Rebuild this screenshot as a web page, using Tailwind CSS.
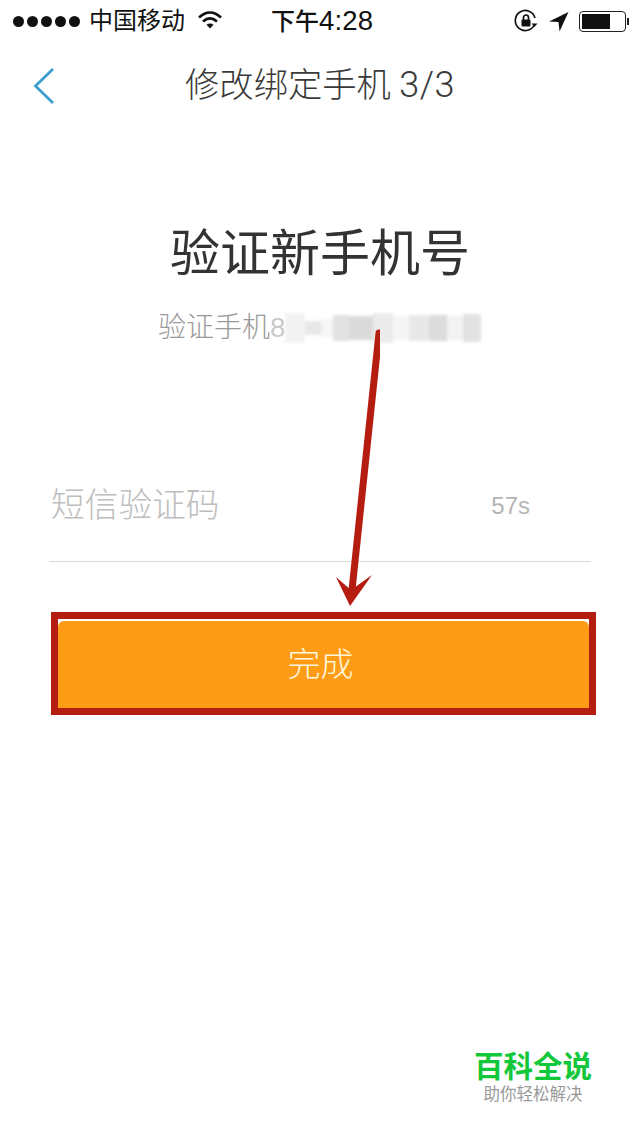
<!DOCTYPE html>
<html lang="zh">
<head>
<meta charset="utf-8">
<script src="https://cdn.jsdelivr.net/npm/@tailwindcss/browser@4"></script>
</head>
<body class="bg-white">
<div class="relative w-[640px] h-[1136px] overflow-hidden bg-white text-[#333] font-['Liberation_Sans','Noto_Sans_CJK_SC',sans-serif]">
  <!-- status bar -->
  <div class="relative h-[42px] flex items-center pl-[13px] pr-[11px] text-[#111]">
    <div class="flex gap-[3px]">
      <span class="w-[11px] h-[11px] rounded-full bg-[#111]"></span>
      <span class="w-[11px] h-[11px] rounded-full bg-[#111]"></span>
      <span class="w-[11px] h-[11px] rounded-full bg-[#111]"></span>
      <span class="w-[11px] h-[11px] rounded-full bg-[#111]"></span>
      <span class="w-[11px] h-[11px] rounded-full bg-[#111]"></span>
    </div>
    <span class="ml-[9px] text-[24px] leading-none">中国移动</span>
    <svg class="ml-[12px] -mt-[3px]" width="26" height="20" viewBox="0 0 26 20" fill="none" stroke="#111" stroke-width="2.6">
      <path d="M2 7.5C9 1 17 1 24 7.5"/><path d="M6 11.5C10.500 7.500 15.500 7.500 20 11.500"/><path d="M13 18.500L9.500 14.800C11.500 13.200 14.500 13.200 16.500 14.800Z" fill="#111" stroke="none"/>
    </svg>
    <span class="ml-[48px] text-[24px] leading-none font-medium">下午<span class="text-[27.500px] tracking-[0.2px]">4:28</span></span>
    <div class="ml-auto flex items-center">
      <svg width="24" height="24" viewBox="0 0 24 24" fill="none" stroke="#111" stroke-width="1.700">
        <path d="M20.500 15.500A10 10 0 1 1 21 9"/><path d="M17.500 14.500L23.500 14.500L20.500 18Z" fill="#111" stroke="none"/>
        <rect x="7.500" y="10.500" width="9" height="7" rx="1" fill="#111" stroke="none"/><path d="M9.500 11V8.500a2.500 2.500 0 0 1 5 0V11"/>
      </svg>
      <svg class="ml-[10px]" width="21" height="21" viewBox="0 0 20 20"><path d="M19.500 1L1 10L10 10.500L11 19.500Z" fill="#111"/></svg>
      <div class="ml-[10px] w-[47px] h-[21px] border-[1.500px] border-[#222] rounded-[4px] p-[2px]"><div class="w-[28px] h-full bg-[#111]"></div></div>
      <span class="ml-[1px] w-[2px] h-[7px] bg-[#222]"></span>
    </div>
  </div>

  <!-- nav -->
  <div class="relative h-[86px] flex items-center justify-center leading-none text-[#3a3a3a] font-light">
    <svg class="absolute left-[32px] top-[24px]" width="24" height="40" viewBox="0 0 24 40" fill="none" stroke="#3b9fd2" stroke-width="2.800"><path d="M21 3L3.500 20L21 37"/></svg>
    <span class="text-[34.300px] -mt-[1px] font-['Roboto','Noto_Sans_CJK_SC',sans-serif] font-light">修改绑定手机 <span class="text-[36px] tracking-[0.5px]">3/3</span></span>
  </div>

  <!-- heading -->
  <h1 class="mt-[96px] text-center text-[50px] leading-[60px] text-[#333] font-normal">验证新手机号</h1>

  <div class="mt-[26px] ml-[158px] h-[36px] flex items-center text-[28px] leading-none text-[#9a9a9a] font-light">
    <span>验证手机</span><span class="text-[28px] text-[#c8c8c8] blur-[0.5px]">8</span>
    <div class="-ml-[1px] flex items-center blur-[1.500px]">
      <span class="w-[20px] h-[30px] bg-[#f3f3f3]"></span>
      <span class="w-[16px] h-[14px] bg-[#e8e8e8]"></span>
      <span class="w-[12px] h-[18px] bg-[#f6f6f6]"></span>
      <span class="w-[16px] h-[26px] bg-[#e2e2e2]"></span>
      <span class="w-[24px] h-[24px] bg-[#dadada]"></span>
      <span class="w-[20px] h-[30px] bg-[#ebebeb]"></span>
      <span class="w-[16px] h-[24px] bg-[#f5f5f5]"></span>
      <span class="w-[20px] h-[26px] bg-[#e8e8e8]"></span>
      <span class="w-[18px] h-[26px] bg-[#dcdcdc]"></span>
      <span class="w-[16px] h-[24px] bg-[#f2f2f2]"></span>
      <span class="w-[18px] h-[28px] bg-[#e2e2e2]"></span>
    </div>
  </div>

  <!-- input -->
  <div class="mt-[134px] mx-[49px] w-[542px] h-[82px] pb-[30px] border-b border-[#d9d9d9] flex items-center justify-between pl-[2px] pr-[61px]">
    <span class="text-[33.700px] leading-none text-[#bebebe] font-light">短信验证码</span>
    <span class="text-[24px] leading-none text-[#b5b5b5]">57s</span>
  </div>

  <!-- button with highlight -->
  <div class="mt-[50px] ml-[51px] w-[545px] h-[103px] border-[7px] border-[#b51d10]">
    <div class="h-full bg-white pt-[2px]">
      <div class="h-full bg-[#fe9c15] rounded-t-[6px] flex items-center justify-center pr-[6px] text-[33px] leading-none text-[#fff6dc] font-light">完成</div>
    </div>
  </div>

  <!-- annotation arrow -->
  <svg class="absolute left-[330px] top-[325px]" width="50" height="285" viewBox="0 0 50 285">
    <path d="M49 8L22 265" stroke="#b51d10" stroke-width="7" stroke-linecap="round" fill="none"/>
    <path d="M6 252L21 265L42 250L20 281Z" fill="#b51d10"/>
  </svg>

  <!-- watermark -->
  <div class="absolute left-[474px] top-[1050px] w-[118px] flex flex-col items-center">
    <span class="text-[29.500px] leading-[34px] font-bold text-[#12c83a]">百科全说</span>
    <span class="text-[16.500px] leading-[20px] text-[#999]">助你轻松解决</span>
  </div>
</div>
</body>
</html>
